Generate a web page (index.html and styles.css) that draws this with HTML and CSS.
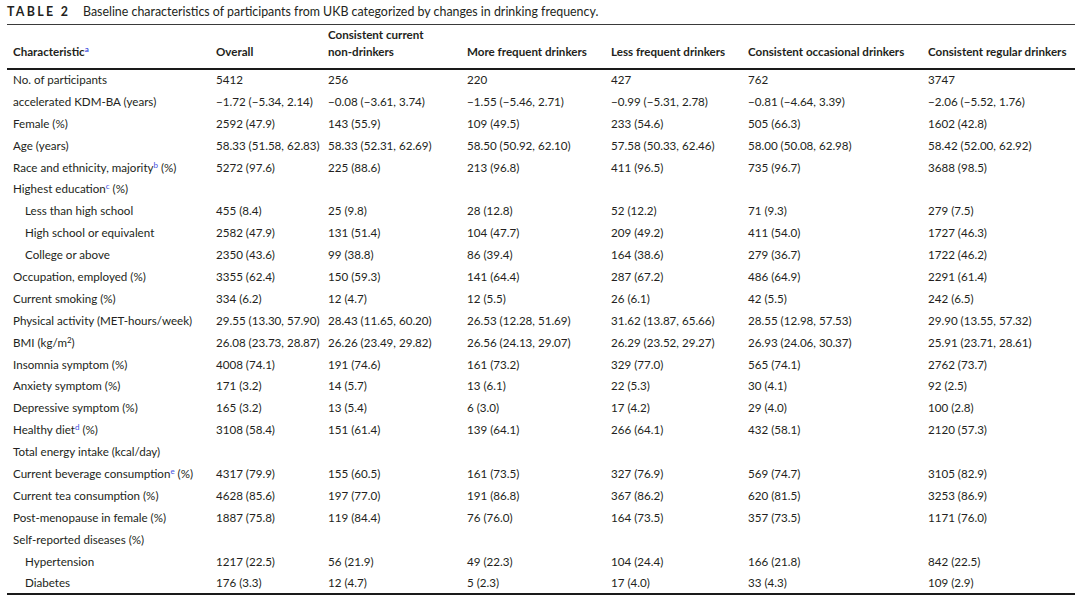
FILE: index.html
```html
<!DOCTYPE html>
<html>
<head>
<meta charset="utf-8">
<link rel="stylesheet" href="styles.css">
</head>
<body>
<div class="page">
  <div class="title"><span class="label">TABLE 2</span><span class="caption">Baseline characteristics of participants from UKB categorized by changes in drinking frequency.</span></div>
  <table class="tbl">
    <colgroup>
      <col class="c1"><col class="c2"><col class="c3"><col class="c4"><col class="c5"><col class="c6"><col class="c7">
    </colgroup>
    <thead>
      <tr>
        <th>Characteristic<sup>a</sup></th>
        <th>Overall</th>
        <th>Consistent current<br>non-drinkers</th>
        <th>More frequent drinkers</th>
        <th>Less frequent drinkers</th>
        <th>Consistent occasional drinkers</th>
        <th>Consistent regular drinkers</th>
      </tr>
    </thead>
    <tbody>
      <tr><td>No. of participants</td><td>5412</td><td>256</td><td>220</td><td>427</td><td>762</td><td>3747</td></tr>
      <tr><td>accelerated KDM-BA (years)</td><td>−1.72 (−5.34, 2.14)</td><td>−0.08 (−3.61, 3.74)</td><td>−1.55 (−5.46, 2.71)</td><td>−0.99 (−5.31, 2.78)</td><td>−0.81 (−4.64, 3.39)</td><td>−2.06 (−5.52, 1.76)</td></tr>
      <tr><td>Female (%)</td><td>2592 (47.9)</td><td>143 (55.9)</td><td>109 (49.5)</td><td>233 (54.6)</td><td>505 (66.3)</td><td>1602 (42.8)</td></tr>
      <tr><td>Age (years)</td><td>58.33 (51.58, 62.83)</td><td>58.33 (52.31, 62.69)</td><td>58.50 (50.92, 62.10)</td><td>57.58 (50.33, 62.46)</td><td>58.00 (50.08, 62.98)</td><td>58.42 (52.00, 62.92)</td></tr>
      <tr><td>Race and ethnicity, majority<sup>b</sup> (%)</td><td>5272 (97.6)</td><td>225 (88.6)</td><td>213 (96.8)</td><td>411 (96.5)</td><td>735 (96.7)</td><td>3688 (98.5)</td></tr>
      <tr><td>Highest education<sup>c</sup> (%)</td><td></td><td></td><td></td><td></td><td></td><td></td></tr>
      <tr><td class="ind">Less than high school</td><td>455 (8.4)</td><td>25 (9.8)</td><td>28 (12.8)</td><td>52 (12.2)</td><td>71 (9.3)</td><td>279 (7.5)</td></tr>
      <tr><td class="ind">High school or equivalent</td><td>2582 (47.9)</td><td>131 (51.4)</td><td>104 (47.7)</td><td>209 (49.2)</td><td>411 (54.0)</td><td>1727 (46.3)</td></tr>
      <tr><td class="ind">College or above</td><td>2350 (43.6)</td><td>99 (38.8)</td><td>86 (39.4)</td><td>164 (38.6)</td><td>279 (36.7)</td><td>1722 (46.2)</td></tr>
      <tr><td>Occupation, employed (%)</td><td>3355 (62.4)</td><td>150 (59.3)</td><td>141 (64.4)</td><td>287 (67.2)</td><td>486 (64.9)</td><td>2291 (61.4)</td></tr>
      <tr><td>Current smoking (%)</td><td>334 (6.2)</td><td>12 (4.7)</td><td>12 (5.5)</td><td>26 (6.1)</td><td>42 (5.5)</td><td>242 (6.5)</td></tr>
      <tr><td>Physical activity (MET-hours/week)</td><td>29.55 (13.30, 57.90)</td><td>28.43 (11.65, 60.20)</td><td>26.53 (12.28, 51.69)</td><td>31.62 (13.87, 65.66)</td><td>28.55 (12.98, 57.53)</td><td>29.90 (13.55, 57.32)</td></tr>
      <tr><td>BMI (kg/m<sup class="pl">2</sup>)</td><td>26.08 (23.73, 28.87)</td><td>26.26 (23.49, 29.82)</td><td>26.56 (24.13, 29.07)</td><td>26.29 (23.52, 29.27)</td><td>26.93 (24.06, 30.37)</td><td>25.91 (23.71, 28.61)</td></tr>
      <tr><td>Insomnia symptom (%)</td><td>4008 (74.1)</td><td>191 (74.6)</td><td>161 (73.2)</td><td>329 (77.0)</td><td>565 (74.1)</td><td>2762 (73.7)</td></tr>
      <tr><td>Anxiety symptom (%)</td><td>171 (3.2)</td><td>14 (5.7)</td><td>13 (6.1)</td><td>22 (5.3)</td><td>30 (4.1)</td><td>92 (2.5)</td></tr>
      <tr><td>Depressive symptom (%)</td><td>165 (3.2)</td><td>13 (5.4)</td><td>6 (3.0)</td><td>17 (4.2)</td><td>29 (4.0)</td><td>100 (2.8)</td></tr>
      <tr><td>Healthy diet<sup>d</sup> (%)</td><td>3108 (58.4)</td><td>151 (61.4)</td><td>139 (64.1)</td><td>266 (64.1)</td><td>432 (58.1)</td><td>2120 (57.3)</td></tr>
      <tr><td>Total energy intake (kcal/day)</td><td></td><td></td><td></td><td></td><td></td><td></td></tr>
      <tr><td>Current beverage consumption<sup>e</sup> (%)</td><td>4317 (79.9)</td><td>155 (60.5)</td><td>161 (73.5)</td><td>327 (76.9)</td><td>569 (74.7)</td><td>3105 (82.9)</td></tr>
      <tr><td>Current tea consumption (%)</td><td>4628 (85.6)</td><td>197 (77.0)</td><td>191 (86.8)</td><td>367 (86.2)</td><td>620 (81.5)</td><td>3253 (86.9)</td></tr>
      <tr><td>Post-menopause in female (%)</td><td>1887 (75.8)</td><td>119 (84.4)</td><td>76 (76.0)</td><td>164 (73.5)</td><td>357 (73.5)</td><td>1171 (76.0)</td></tr>
      <tr><td>Self-reported diseases (%)</td><td></td><td></td><td></td><td></td><td></td><td></td></tr>
      <tr><td class="ind">Hypertension</td><td>1217 (22.5)</td><td>56 (21.9)</td><td>49 (22.3)</td><td>104 (24.4)</td><td>166 (21.8)</td><td>842 (22.5)</td></tr>
      <tr><td class="ind">Diabetes</td><td>176 (3.3)</td><td>12 (4.7)</td><td>5 (2.3)</td><td>17 (4.0)</td><td>33 (4.3)</td><td>109 (2.9)</td></tr>
    </tbody>
  </table>
</div>
</body>
</html>
```

FILE: styles.css
```css
html, body {
  margin: 0;
  padding: 0;
  background: #ffffff;
}
body {
  width: 1080px;
  height: 602px;
  overflow: hidden;
  font-family: Lato, "Liberation Sans", sans-serif;
  color: #231f20;
}
.page {
  padding: 0 5px 0 7px;
}
.title {
  height: 24px;
  display: flex;
  align-items: center;
  font-size: 12.4px;
  line-height: 15px;
  box-sizing: border-box;
  padding-bottom: 2px;
}
.label {
  font-weight: 700;
  letter-spacing: 2.3px;
  width: 76px;
  flex: none;
}
.caption {
  font-weight: 400;
}
.tbl {
  width: 1068px;
  table-layout: fixed;
  border-collapse: collapse;
  border-top: 1.5px solid #3a3a3a;
  border-bottom: 2px solid #1a1a1a;
  font-size: 11.6px;
}
.c1 { width: 203px; }
.c2 { width: 112px; }
.c3 { width: 139px; }
.c4 { width: 144px; }
.c5 { width: 137px; }
.c6 { width: 180px; }
.c7 { width: 153px; }
.tbl th {
  font-weight: 700;
  font-size: 11.6px;
  text-align: left;
  vertical-align: bottom;
  padding: 0 0 8px 6px;
  height: 35px;
  line-height: 16.5px;
  border-bottom: 2px solid #1a1a1a;
  white-space: nowrap;
}
.tbl tbody tr {
  height: 21.9px;
}
.tbl td {
  padding: 0 0 0 6px;
  line-height: 14px;
  vertical-align: middle;
  white-space: nowrap;
}
.tbl td.ind {
  padding-left: 18px;
}
sup {
  font-size: 8px;
  line-height: 0;
  vertical-align: 4.5px;
  color: #3f51e0;
}
sup.pl {
  color: #231f20;
}
```
